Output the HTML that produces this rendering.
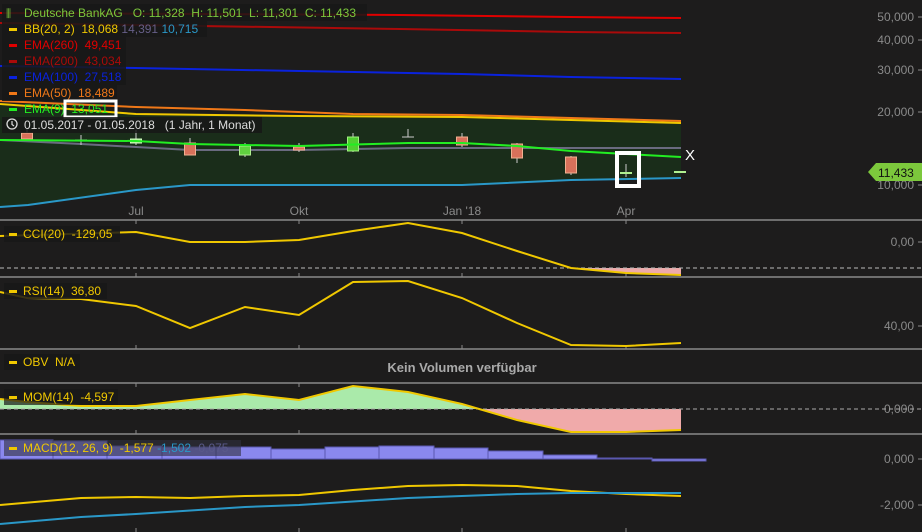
<!DOCTYPE html>
<html><head><meta charset="utf-8"><style>
html,body{margin:0;padding:0;background:#1d1c1c;}
svg{display:block;font-family:"Liberation Sans",sans-serif;}
text{white-space:pre;}
</style></head><body>
<svg width="922" height="532" viewBox="0 0 922 532" xmlns="http://www.w3.org/2000/svg" xml:space="preserve">
<rect width="922" height="532" fill="#1d1c1c"/>
<polygon points="0,104 136,114 299,116 462,117 571,120 681,123 681,178 571,180 462,185 299,185 190,185 136,190 28,205 0,207" fill="#1a2d1a"/>
<polyline points="0,13 200,14 400,15 571,17 681,18" fill="none" stroke="#e00000" stroke-width="2"/>
<polyline points="0,23 200,26 400,29 571,32 681,33" fill="none" stroke="#aa0a0a" stroke-width="2"/>
<polyline points="0,66 136,68 299,71 462,74 571,77 681,79" fill="none" stroke="#0a22dd" stroke-width="2"/>
<polyline points="0,101 136,107 245,110 353,114 462,115 571,118 681,121" fill="none" stroke="#f07818" stroke-width="2"/>
<polyline points="0,104 136,114 299,116 462,117 571,120 681,123" fill="none" stroke="#f0c800" stroke-width="2"/>
<polyline points="0,140 81,144 190,150 299,150 408,148 571,148 681,148" fill="none" stroke="#6a6a80" stroke-width="2"/>
<polyline points="0,207 28,205 136,190 190,185 462,185 571,180 681,178" fill="none" stroke="#2a98c8" stroke-width="2"/>
<g stroke-width="1">
<line x1="27" y1="128" x2="27" y2="141" stroke="#ccc"/><rect x="21.5" y="133" width="11" height="6" fill="#d8705a" stroke="#f0b090"/>
<line x1="81" y1="135" x2="81" y2="145" stroke="#ccc"/><line x1="75" y1="140" x2="87" y2="140" stroke="#ccc"/>
<line x1="136" y1="130" x2="136" y2="145" stroke="#ccc"/><rect x="130.5" y="139" width="11" height="4" fill="#a8f090" stroke="#d0ffc0"/>
<line x1="190" y1="138" x2="190" y2="155" stroke="#ccc"/><rect x="184.5" y="143" width="11" height="12" fill="#d8705a" stroke="#f0b090"/>
<line x1="245" y1="143" x2="245" y2="157" stroke="#ccc"/><rect x="239.5" y="146" width="11" height="9" fill="#60d040" stroke="#b0f090"/>
<line x1="299" y1="143" x2="299" y2="152" stroke="#ccc"/><rect x="293.5" y="147" width="11" height="3" fill="#d8705a" stroke="#f0b090"/>
<line x1="353" y1="133" x2="353" y2="152" stroke="#ccc"/><rect x="347.5" y="137" width="11" height="14" fill="#50d030" stroke="#a0f080"/>
<line x1="408" y1="129" x2="408" y2="137" stroke="#ccc"/><line x1="402" y1="137" x2="414" y2="137" stroke="#ccc"/>
<line x1="462" y1="133" x2="462" y2="147" stroke="#ccc"/><rect x="456.5" y="137" width="11" height="8" fill="#d8705a" stroke="#f0b090"/>
<line x1="517" y1="143" x2="517" y2="163" stroke="#ccc"/><rect x="511.5" y="144" width="11" height="14" fill="#d8705a" stroke="#f0b090"/>
<line x1="571" y1="156" x2="571" y2="175" stroke="#ccc"/><rect x="565.5" y="157" width="11" height="16" fill="#d8705a" stroke="#f0b090"/>
<line x1="626" y1="164" x2="626" y2="177" stroke="#ccc"/><line x1="620" y1="173" x2="632" y2="173" stroke="#b0f090" stroke-width="2"/>
<line x1="674" y1="172" x2="686" y2="172" stroke="#b0f090" stroke-width="2"/>
</g>
<polyline points="0,140 136,141 190,144 299,146 408,143 462,143 517,146 571,151 626,154 681,157" fill="none" stroke="#22ee22" stroke-width="2"/>
<rect x="617" y="153" width="22" height="33" fill="none" stroke="#fff" stroke-width="4"/>
<text x="685" y="160" fill="#fff" font-size="15">X</text>
<g fill="#8a8a8a" font-size="12" text-anchor="end">
<text x="914" y="21">50,000</text><text x="914" y="44">40,000</text><text x="914" y="74">30,000</text><text x="914" y="116">20,000</text><text x="914" y="189">10,000</text>
<text x="914" y="246">0,00</text><text x="914" y="330">40,00</text><text x="914" y="413">0,000</text><text x="914" y="463">0,000</text><text x="914" y="509">-2,000</text>
</g>
<g stroke="#8a8a8a"><line x1="918" y1="17" x2="922" y2="17"/><line x1="918" y1="40" x2="922" y2="40"/><line x1="918" y1="70" x2="922" y2="70"/><line x1="918" y1="112" x2="922" y2="112"/><line x1="918" y1="185" x2="922" y2="185"/><line x1="918" y1="242" x2="922" y2="242"/><line x1="918" y1="326" x2="922" y2="326"/><line x1="918" y1="459" x2="922" y2="459"/><line x1="918" y1="505" x2="922" y2="505"/></g>
<polygon points="868,172 876,163 922,163 922,181 876,181" fill="#7cc83c"/>
<text x="878" y="177" fill="#111" font-size="12">11,433</text>
<g fill="#8a8a8a" font-size="12" text-anchor="middle"><text x="136" y="215">Jul</text><text x="299" y="215">Okt</text><text x="462" y="215">Jan '18</text><text x="626" y="215">Apr</text></g>
<g stroke="#8a8a8a" stroke-width="1.5"><line x1="0" y1="220" x2="922" y2="220"/><line x1="0" y1="277" x2="922" y2="277"/><line x1="0" y1="349" x2="922" y2="349"/><line x1="0" y1="383" x2="922" y2="383"/><line x1="0" y1="434" x2="922" y2="434"/></g>
<g stroke="#8a8a8a"><line x1="136" y1="220" x2="136" y2="224"/><line x1="299" y1="220" x2="299" y2="224"/><line x1="462" y1="220" x2="462" y2="224"/><line x1="626" y1="220" x2="626" y2="224"/>
<line x1="136" y1="273" x2="136" y2="277"/><line x1="299" y1="273" x2="299" y2="277"/><line x1="462" y1="273" x2="462" y2="277"/><line x1="626" y1="273" x2="626" y2="277"/>
<line x1="136" y1="345" x2="136" y2="349"/><line x1="299" y1="345" x2="299" y2="349"/><line x1="462" y1="345" x2="462" y2="349"/><line x1="626" y1="345" x2="626" y2="349"/>
<line x1="136" y1="383" x2="136" y2="387"/><line x1="299" y1="383" x2="299" y2="387"/><line x1="136" y1="430" x2="136" y2="434"/><line x1="299" y1="430" x2="299" y2="434"/>
<line x1="136" y1="528" x2="136" y2="532"/><line x1="299" y1="528" x2="299" y2="532"/><line x1="462" y1="528" x2="462" y2="532"/><line x1="626" y1="528" x2="626" y2="532"/></g>
<polygon points="571,268 626,273 681,275 681,268" fill="#eeaaaa"/>
<line x1="0" y1="268" x2="922" y2="268" stroke="#bbb" stroke-dasharray="4,3"/>
<polyline points="0,236 136,232 190,242 245,242 299,240 353,231 408,223 462,233 517,251 571,268 626,273 681,275" fill="none" stroke="#f0c800" stroke-width="2"/>
<polyline points="0,292 27,298 81,299 136,306 190,328 245,307 299,315 353,282 408,281 462,298 517,323 571,345 626,346 681,343" fill="none" stroke="#f0c800" stroke-width="2"/>
<text x="462" y="372" fill="#aaa" font-size="13" font-weight="bold" text-anchor="middle">Kein Volumen verfügbar</text>
<polygon points="0,399 27,402 81,406 136,406 190,400 245,394 299,400 353,386 408,392 462,404 480,409 0,409" fill="#aaeaaa"/>
<polygon points="480,409 517,420 571,432 626,432 681,430 681,409" fill="#f0aaaa"/>
<line x1="0" y1="409" x2="922" y2="409" stroke="#aaa" stroke-dasharray="4,3"/>
<polyline points="0,399 27,402 81,406 136,406 190,400 245,394 299,400 353,386 408,392 462,404 517,420 571,432 626,432 681,430" fill="none" stroke="#f0c800" stroke-width="2"/>
<g fill="#8a88ee" stroke="#5a58b0">
<rect x="0" y="440" width="53" height="19"/><rect x="53" y="441" width="54" height="18"/><rect x="107" y="446" width="55" height="13"/><rect x="162" y="447" width="54" height="12"/><rect x="216" y="447" width="55" height="12"/><rect x="271" y="449" width="54" height="10"/><rect x="325" y="447" width="54" height="12"/><rect x="379" y="446" width="55" height="13"/><rect x="434" y="448" width="54" height="11"/><rect x="488" y="451" width="55" height="8"/><rect x="543" y="455" width="54" height="4"/><rect x="597" y="458" width="55" height="1"/><rect x="652" y="459" width="54" height="2"/>
</g>
<polyline points="0,505 81,498 136,497 190,498 245,496 299,495 353,490 408,486 462,485 517,486 571,491 626,494 681,496" fill="none" stroke="#f0c800" stroke-width="2"/>
<polyline points="0,524 81,517 136,514 245,507 299,505 408,498 517,494 571,493 681,493" fill="none" stroke="#2a98c8" stroke-width="2"/>
<g font-size="12">
<rect x="2" y="4" width="365" height="17" fill="#181818" opacity="0.85"/>
<text x="6" y="17" fill="#7cc83c" font-size="11">⫼</text>
<text x="24" y="17" fill="#7cc83c">Deutsche BankAG   O: 11,328  H: 11,501  L: 11,301  C: 11,433</text>
<rect x="2" y="21" width="205" height="16" fill="#181818" opacity="0.85"/>
<rect x="9" y="28" width="8" height="3" fill="#f0c800"/><text x="24" y="33" fill="#f0c800">BB(20, 2)  18,068 <tspan fill="#665f88">14,391</tspan> <tspan fill="#2a98c8">10,715</tspan></text>
<rect x="2" y="37" width="124" height="16" fill="#181818" opacity="0.85"/>
<rect x="9" y="44" width="8" height="3" fill="#e00000"/><text x="24" y="49" fill="#e00000">EMA(260)  49,451</text>
<rect x="2" y="53" width="124" height="16" fill="#181818" opacity="0.85"/>
<rect x="9" y="60" width="8" height="3" fill="#aa0a0a"/><text x="24" y="65" fill="#aa0a0a">EMA(200)  43,034</text>
<rect x="2" y="69" width="124" height="16" fill="#181818" opacity="0.85"/>
<rect x="9" y="76" width="8" height="3" fill="#0a22dd"/><text x="24" y="81" fill="#0a22dd">EMA(100)  27,518</text>
<rect x="2" y="85" width="115" height="16" fill="#181818" opacity="0.85"/>
<rect x="9" y="92" width="8" height="3" fill="#f07818"/><text x="24" y="97" fill="#f07818">EMA(50)  18,489</text>
<rect x="9" y="108" width="8" height="3" fill="#22ee22"/><text x="24" y="113" fill="#22ee22">EMA(9)  13,051</text>
<rect x="65" y="101" width="51" height="16" fill="none" stroke="#fff" stroke-width="3"/>
<rect x="2" y="117" width="260" height="16" fill="#181818" opacity="0.85"/>
<circle cx="12" cy="124" r="5" fill="none" stroke="#ddd" stroke-width="1.3"/><path d="M12 121v3.5l2 1.5" fill="none" stroke="#ddd" stroke-width="1.2"/>
<text x="24" y="129" fill="#ddd">01.05.2017 - 01.05.2018   (1 Jahr, 1 Monat)</text>
<rect x="4" y="226" width="116" height="16" fill="#181818" opacity="0.85"/>
<rect x="9" y="233" width="8" height="3" fill="#f0c800"/><text x="23" y="238" fill="#f0c800">CCI(20)  -129,05</text>
<rect x="4" y="283" width="103" height="16" fill="#181818" opacity="0.85"/>
<rect x="9" y="290" width="8" height="3" fill="#f0c800"/><text x="23" y="295" fill="#f0c800">RSI(14)  36,80</text>
<rect x="4" y="354" width="76" height="16" fill="#181818" opacity="0.85"/>
<rect x="9" y="361" width="8" height="3" fill="#f0c800"/><text x="23" y="366" fill="#f0c800">OBV  N/A</text>
<rect x="4" y="389" width="114" height="16" fill="#181818" opacity="0.7"/>
<rect x="9" y="396" width="8" height="3" fill="#f0c800"/><text x="23" y="401" fill="#f0c800">MOM(14)  -4,597</text>
<rect x="4" y="440" width="237" height="16" fill="#303040" opacity="0.6"/>
<rect x="9" y="447" width="8" height="3" fill="#f0c800"/><text x="23" y="452" fill="#f0c800">MACD(12, 26, 9)  -1,577 <tspan fill="#2a98c8">-1,502</tspan> <tspan fill="#5a5a8a">-0,075</tspan></text>
</g>
</svg>
</body></html>
